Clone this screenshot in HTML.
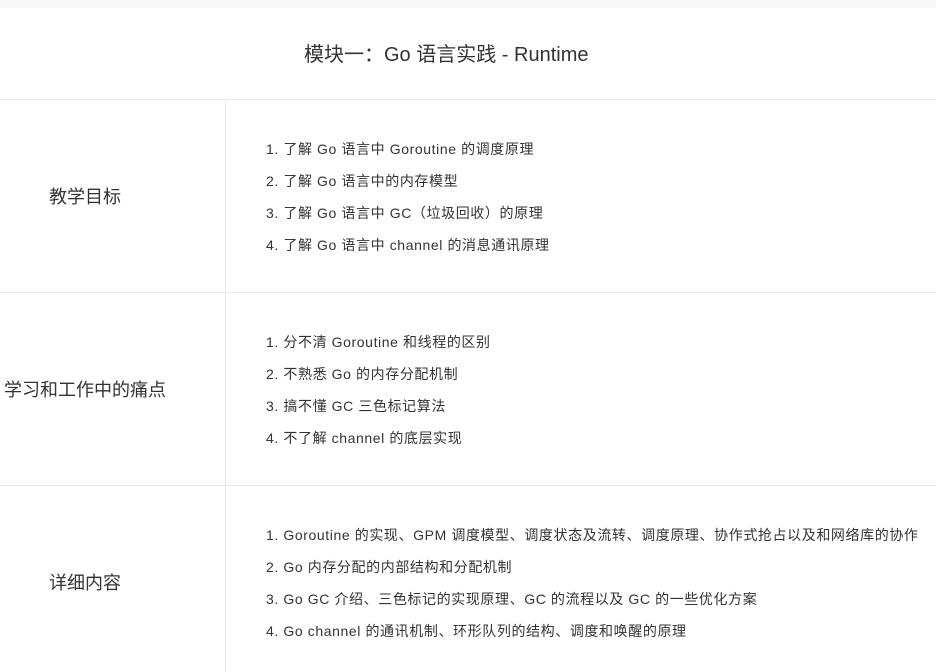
<!DOCTYPE html>
<html><head><meta charset="utf-8"><style>
body{margin:0;width:936px;height:672px;overflow:hidden;background:#fff;font-family:"Liberation Sans","Noto Sans CJK SC",sans-serif;color:#333;position:relative}
.top{position:absolute;left:0;top:0;width:936px;height:8px;background:#f8f8f8}
.title{position:absolute;left:304px;top:42px;font-size:20px;line-height:26px;white-space:nowrap}
.h{position:absolute;left:0;width:936px;height:1px;background:#e8e8e8}
.v{position:absolute;left:225px;width:1px;background:#e8e8e8;top:99px;height:573px}
.lab{position:absolute;width:170px;text-align:center;font-size:18px;line-height:24px;white-space:nowrap}
.it{position:absolute;left:266px;font-size:14px;letter-spacing:0.6px;line-height:18px;white-space:nowrap}
</style></head><body>
<div class="top"></div>
<div class="title">模块一：Go 语言实践 - Runtime</div>
<div class="h" style="top:99px"></div>
<div class="h" style="top:292px"></div>
<div class="h" style="top:485px"></div>
<div class="v"></div>
<div class="lab" style="top:185px">教学目标</div>
<div class="it" style="top:140px">1. 了解 Go 语言中 Goroutine 的调度原理</div>
<div class="it" style="top:172px">2. 了解 Go 语言中的内存模型</div>
<div class="it" style="top:204px">3. 了解 Go 语言中 GC（垃圾回收）的原理</div>
<div class="it" style="top:236px">4. 了解 Go 语言中 channel 的消息通讯原理</div>
<div class="lab" style="top:378px">学习和工作中的痛点</div>
<div class="it" style="top:333px">1. 分不清 Goroutine 和线程的区别</div>
<div class="it" style="top:365px">2. 不熟悉 Go 的内存分配机制</div>
<div class="it" style="top:397px">3. 搞不懂 GC 三色标记算法</div>
<div class="it" style="top:429px">4. 不了解 channel 的底层实现</div>
<div class="lab" style="top:571px">详细内容</div>
<div class="it" style="top:526px">1. Goroutine 的实现、GPM 调度模型、调度状态及流转、调度原理、协作式抢占以及和网络库的协作</div>
<div class="it" style="top:558px">2. Go 内存分配的内部结构和分配机制</div>
<div class="it" style="top:590px">3. Go GC 介绍、三色标记的实现原理、GC 的流程以及 GC 的一些优化方案</div>
<div class="it" style="top:622px">4. Go channel 的通讯机制、环形队列的结构、调度和唤醒的原理</div>
</body></html>
